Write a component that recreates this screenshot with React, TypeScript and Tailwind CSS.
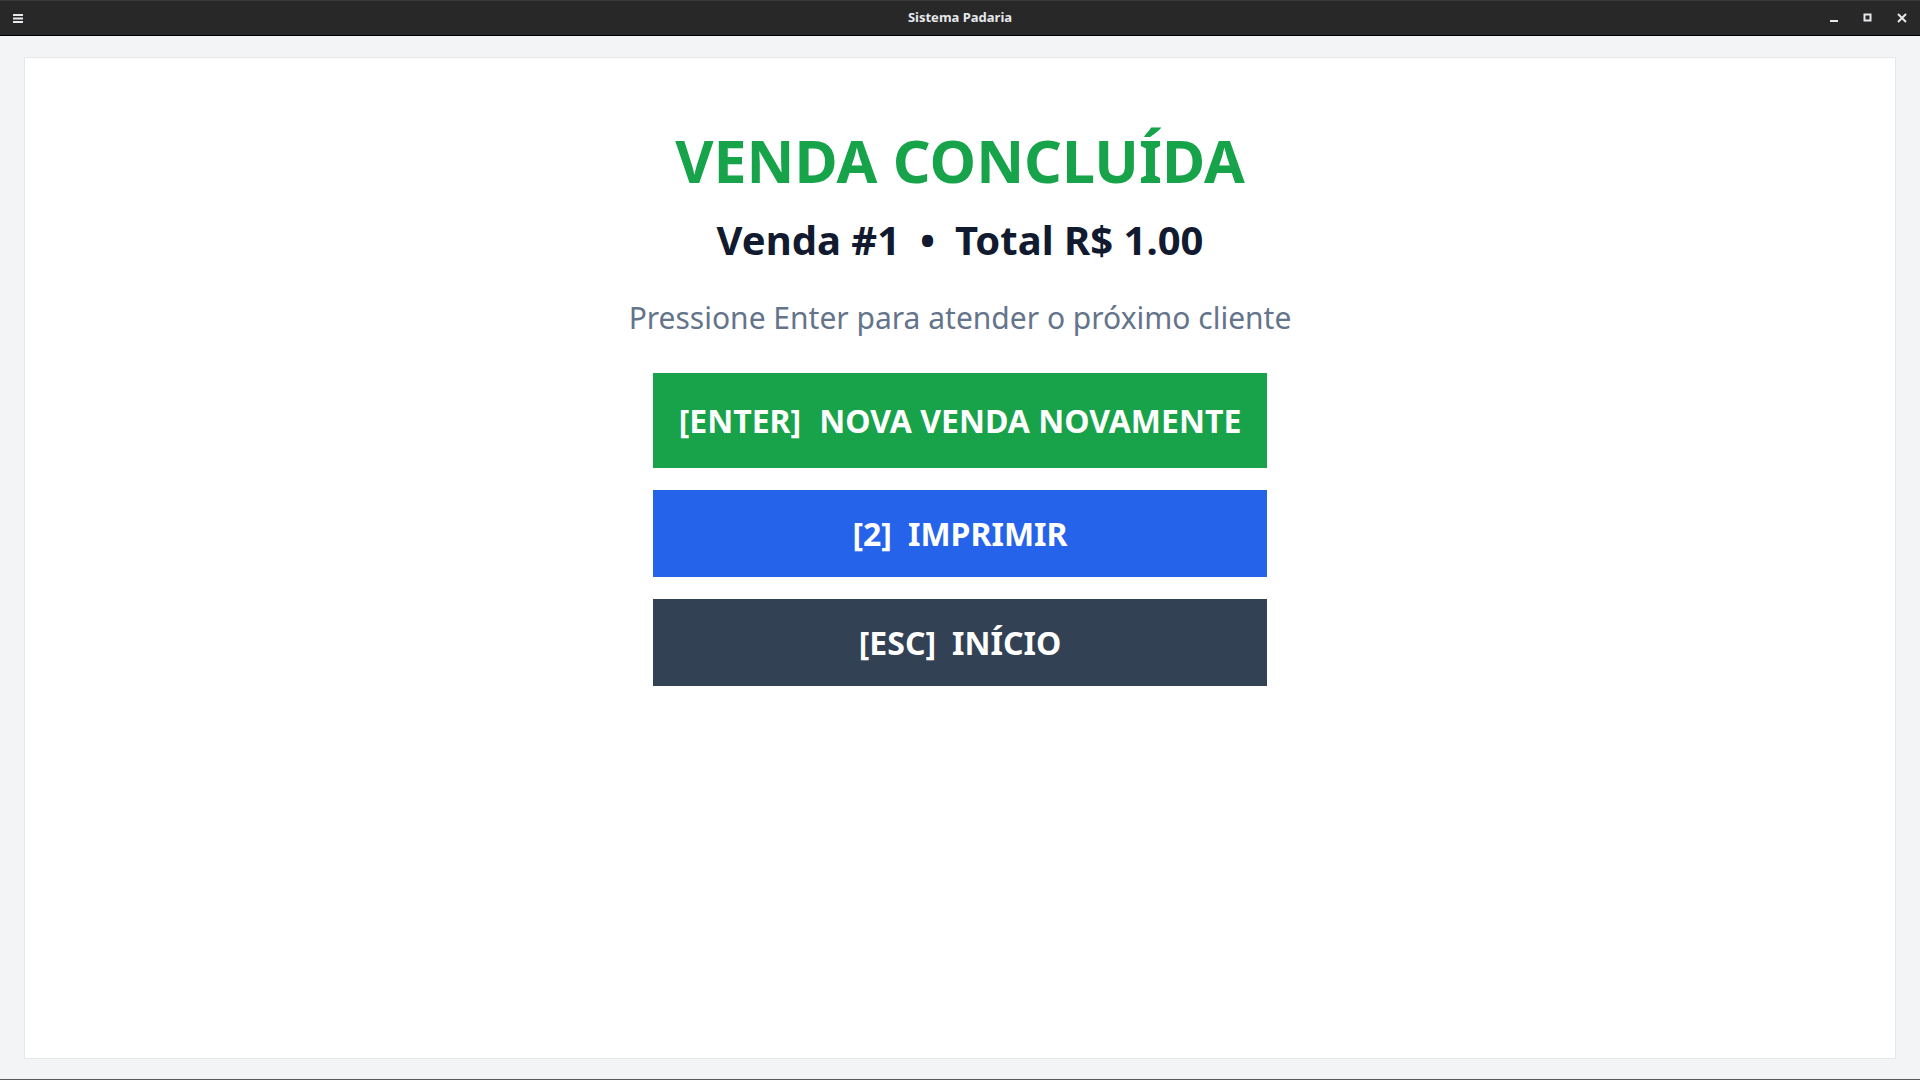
import React from "react";

export default function App() {
  return (
    <div className="w-[1920px] h-[1080px] flex flex-col bg-[#f3f4f6] overflow-hidden" style={{ fontFamily: '"Noto Sans", "Open Sans", sans-serif' }}>
      {/* Title bar */}
      <div className="h-[36px] shrink-0 bg-[#282828] border-t border-t-[#3a3a3a] border-b border-b-black flex items-center justify-between px-[13px] relative">
        <svg width="11" height="11" viewBox="0 0 11 11" className="text-[#e8eaee]">
          <rect x="0" y="1" width="10" height="2" fill="currentColor" />
          <rect x="0" y="4.5" width="10" height="2" fill="currentColor" />
          <rect x="0" y="8" width="10" height="2" fill="currentColor" />
        </svg>
        <div className="absolute left-0 right-0 top-0 bottom-0 flex items-center justify-center pointer-events-none">
          <span className="text-[13px] font-bold text-[#e6e8ec]">Sistema Padaria</span>
        </div>
        <div className="flex items-center gap-[24px]">
          <svg width="10" height="10" viewBox="0 0 10 10">
            <rect x="1" y="7" width="8" height="2" fill="#e6e8ec" />
          </svg>
          <svg width="10" height="10" viewBox="0 0 10 10">
            <rect x="1.5" y="1.5" width="6" height="6" fill="none" stroke="#e6e8ec" strokeWidth="2" />
          </svg>
          <svg width="10" height="10" viewBox="0 0 10 10">
            <path d="M1 1 L9 9 M9 1 L1 9" stroke="#e6e8ec" strokeWidth="2" />
          </svg>
        </div>
      </div>

      {/* Main area */}
      <div className="flex-1 px-6 pt-[21px] pb-[20px] border-b border-b-[#5a5a5a]">
        <div className="h-full bg-white border border-[#e5e7eb] flex flex-col items-center pt-[72px]">
          <h1 className="text-[59px] leading-[60px] font-bold text-[#16a34a]">VENDA CONCLUÍDA</h1>
          <div className="mt-[30px] text-[40px] leading-[40px] font-bold text-[#111a2e] flex items-center">
            <span>Venda #1</span>
            <span className="mx-[20px]">•</span>
            <span>Total R$ 1.00</span>
          </div>
          <p className="mt-[43px] text-[30px] leading-[30px] text-[#64748b]">Pressione Enter para atender o próximo cliente</p>
          <div className="mt-[40px] w-[614px] flex flex-col gap-[22px]">
            <button className="h-[95px] bg-[#18a34a] text-white text-[32px] font-bold flex items-center justify-center gap-[18px]">
              <span>[ENTER]</span>
              <span>NOVA VENDA NOVAMENTE</span>
            </button>
            <button className="h-[87px] bg-[#2563eb] text-white text-[32px] font-bold flex items-center justify-center gap-[16px]">
              <span>[2]</span>
              <span>IMPRIMIR</span>
            </button>
            <button className="h-[87px] bg-[#334155] text-white text-[32px] font-bold flex items-center justify-center gap-[16px]">
              <span>[ESC]</span>
              <span>INÍCIO</span>
            </button>
          </div>
        </div>
      </div>
    </div>
  );
}
